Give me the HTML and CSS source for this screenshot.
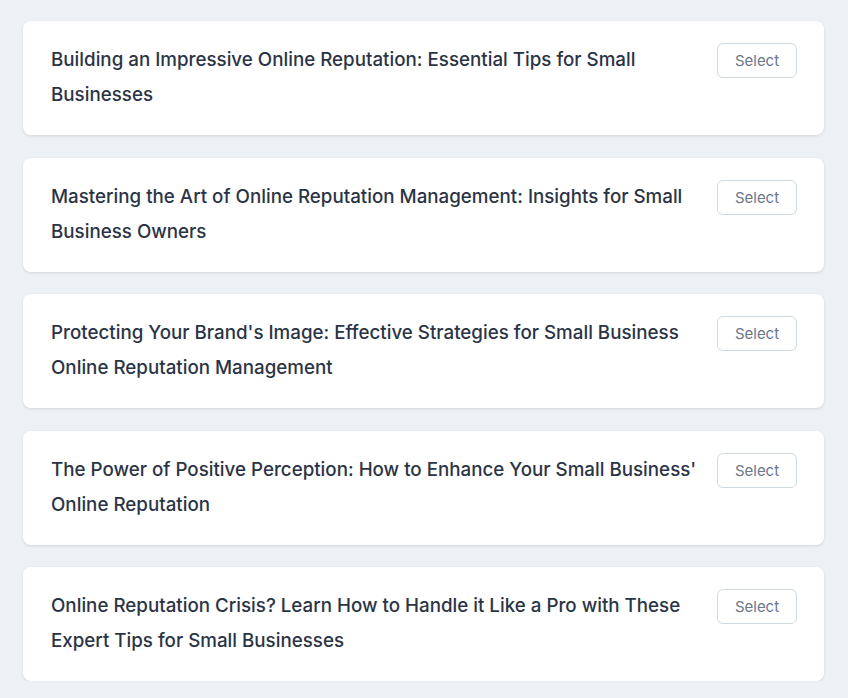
FILE: index.html
```html
<!DOCTYPE html>
<html lang="en">
<head>
<meta charset="utf-8">
<title>Titles</title>
<link rel="stylesheet" href="styles.css">
</head>
<body>
<main class="list">
  <div class="card">
    <p class="title">Building an Impressive Online Reputation: Essential Tips for Small Businesses</p>
    <button class="select">Select</button>
  </div>
  <div class="card">
    <p class="title">Mastering the Art of Online Reputation Management: Insights for Small Business Owners</p>
    <button class="select">Select</button>
  </div>
  <div class="card">
    <p class="title">Protecting Your Brand's Image: Effective Strategies for Small Business Online Reputation Management</p>
    <button class="select">Select</button>
  </div>
  <div class="card">
    <p class="title">The Power of Positive Perception: How to Enhance Your Small Business' Online Reputation</p>
    <button class="select">Select</button>
  </div>
  <div class="card">
    <p class="title">Online Reputation Crisis? Learn How to Handle it Like a Pro with These Expert Tips for Small Businesses</p>
    <button class="select">Select</button>
  </div>
</main>
</body>
</html>
```
FILE: styles.css
```css
html, body {
  margin: 0;
  padding: 0;
  background: #edf1f5;
}
.list {
  display: flex;
  flex-direction: column;
  gap: 22.5px;
  padding: 21px 24px 0 23px;
}
.card {
  background: #ffffff;
  border-radius: 8px;
  box-shadow: 0 1px 3px rgba(15, 23, 42, 0.12);
  display: flex;
  align-items: flex-start;
  justify-content: space-between;
  gap: 14px;
  padding: 21px 27px 22px 28px;
  height: 114px;
  box-sizing: border-box;
}
.title {
  margin: 0;
  font-family: "Inter", "Noto Sans", sans-serif;
  font-weight: 500;
  font-size: 18.75px;
  line-height: 35px;
  color: #2b3445;
  flex: 1;
}
.select {
  flex: none;
  width: 80px;
  height: 35px;
  margin-top: 1px;
  background: #fff;
  border: 1px solid #cfd8e3;
  border-radius: 6px;
  font-family: "Inter", "Liberation Sans", sans-serif;
  font-size: 15px;
  color: #6b778a;
  padding: 0;
}
```
